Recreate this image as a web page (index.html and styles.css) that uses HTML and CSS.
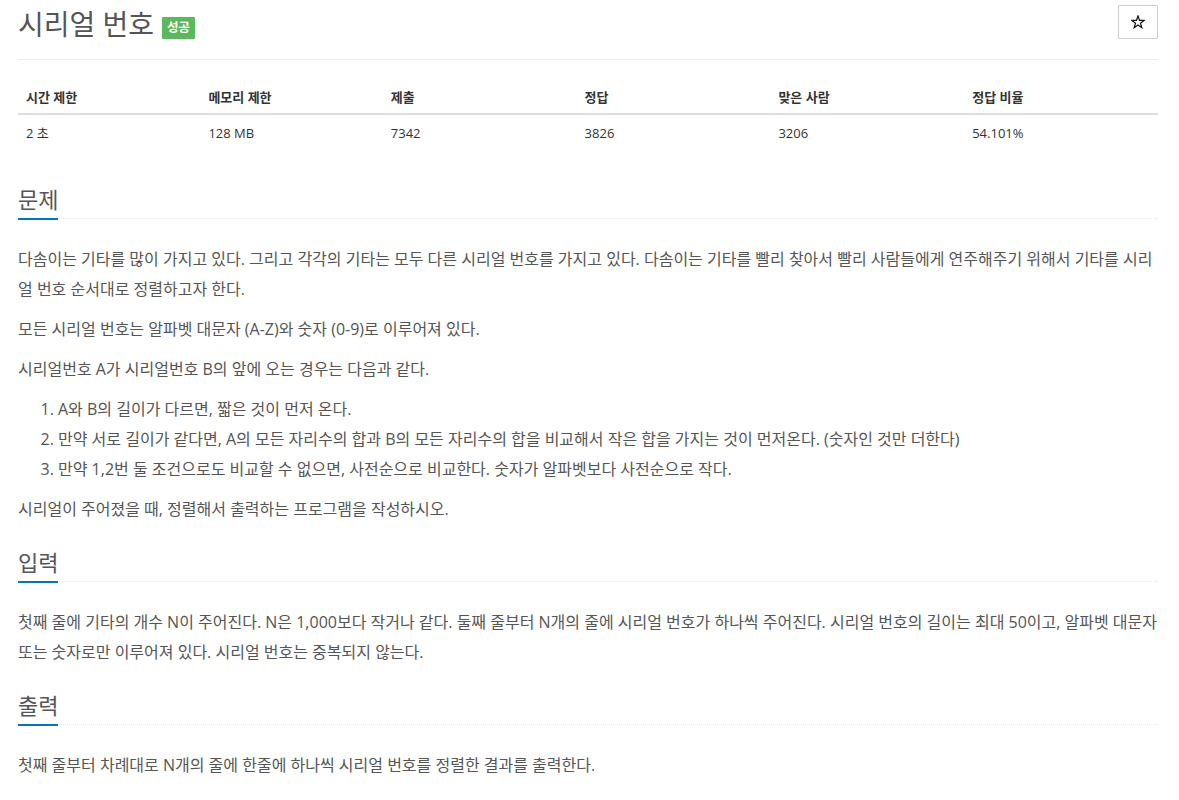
FILE: index.html
```html
<!DOCTYPE html>
<html lang="ko">
<head>
<meta charset="utf-8">
<title>시리얼 번호</title>
<link rel="stylesheet" href="styles.css">
</head>
<body>
<div class="container">
  <div class="page-header">
    <h1 class="title">시리얼 번호 <span class="label-success">성공</span></h1>
    <button class="star-btn" type="button" aria-label="즐겨찾기">
      <svg class="star-icon" width="14" height="14" viewBox="0 0 14 14" aria-hidden="true">
        <path d="M7 0.9 L8.53 5.3 L13.18 5.39 L9.47 8.2 L10.82 12.66 L7 10 L3.18 12.66 L4.53 8.2 L0.82 5.39 L5.47 5.3 Z" fill="none" stroke="#111" stroke-width="1.2" stroke-linejoin="miter"/>
      </svg>
    </button>
  </div>

  <table class="info-table">
    <thead>
      <tr>
        <th class="w16">시간 제한</th>
        <th class="w16">메모리 제한</th>
        <th class="w17">제출</th>
        <th class="w17">정답</th>
        <th class="w17">맞은 사람</th>
        <th class="w17">정답 비율</th>
      </tr>
    </thead>
    <tbody>
      <tr>
        <td>2 초</td>
        <td>128 MB</td>
        <td>7342</td>
        <td>3826</td>
        <td>3206</td>
        <td>54.101%</td>
      </tr>
    </tbody>
  </table>

  <section class="problem-section">
    <div class="headline"><h2>문제</h2></div>
    <div class="problem-text">
      <p>다솜이는 기타를 많이 가지고 있다. 그리고 각각의 기타는 모두 다른 시리얼 번호를 가지고 있다. 다솜이는 기타를 빨리 찾아서 빨리 사람들에게 연주해주기 위해서 기타를 시리얼 번호 순서대로 정렬하고자 한다.</p>
      <p>모든 시리얼 번호는 알파벳 대문자 (A-Z)와 숫자 (0-9)로 이루어져 있다.</p>
      <p>시리얼번호 A가 시리얼번호 B의 앞에 오는 경우는 다음과 같다.</p>
      <ol>
        <li>A와 B의 길이가 다르면, 짧은 것이 먼저 온다.</li>
        <li>만약 서로 길이가 같다면, A의 모든 자리수의 합과 B의 모든 자리수의 합을 비교해서 작은 합을 가지는 것이 먼저온다. (숫자인 것만 더한다)</li>
        <li>만약 1,2번 둘 조건으로도 비교할 수 없으면, 사전순으로 비교한다. 숫자가 알파벳보다 사전순으로 작다.</li>
      </ol>
      <p>시리얼이 주어졌을 때, 정렬해서 출력하는 프로그램을 작성하시오.</p>
    </div>
  </section>

  <section class="problem-section">
    <div class="headline"><h2>입력</h2></div>
    <div class="problem-text">
      <p>첫째 줄에 기타의 개수 N이 주어진다. N은 1,000보다 작거나 같다. 둘째 줄부터 N개의 줄에 시리얼 번호가 하나씩 주어진다. 시리얼 번호의 길이는 최대 50이고, 알파벳 대문자 또는 숫자로만 이루어져 있다. 시리얼 번호는 중복되지 않는다.</p>
    </div>
  </section>

  <section class="problem-section">
    <div class="headline"><h2>출력</h2></div>
    <div class="problem-text">
      <p>첫째 줄부터 차례대로 N개의 줄에 한줄에 하나씩 시리얼 번호를 정렬한 결과를 출력한다.</p>
    </div>
  </section>
</div>
</body>
</html>
```

FILE: styles.css
```css
html, body {
  margin: 0;
  padding: 0;
  background: #fff;
}

body {
  font-family: "Open Sans", "Noto Sans CJK KR", sans-serif;
  color: #555;
  font-size: 16px;
}

.container {
  width: 1140px;
  padding: 0 21px 0 18px;
}

.page-header {
  display: flex;
  justify-content: space-between;
  align-items: flex-start;
  border-bottom: 1px solid #eee;
  padding-bottom: 11px;
}

.title {
  margin: 0;
  font-size: 28px;
  font-weight: 400;
  line-height: 48px;
  color: #555;
  display: flex;
  align-items: center;
}

.label-success {
  display: inline-block;
  margin-left: 8px;
  margin-top: 8px;
  background: #5cb85c;
  color: #fff;
  font-size: 12.5px;
  font-weight: 700;
  line-height: 14px;
  padding: 4px 5px;
  border-radius: 1px;
}

.star-btn {
  margin-top: 5px;
  width: 40px;
  height: 34px;
  border: 1px solid #ccc;
  background: #fff;
  padding: 0;
  border-radius: 1px;
  display: flex;
  align-items: center;
  justify-content: center;
}

.star-icon {
  display: block;
}

.info-table {
  width: 100%;
  border-collapse: collapse;
  margin: 19px 0 20px;
  font-size: 13px;
  color: #333;
}

.info-table th,
.info-table td {
  text-align: left;
  padding: 8px;
  line-height: 20px;
}

.info-table th {
  font-weight: 700;
  padding-bottom: 6px;
  border-bottom: 2px solid #ddd;
}

.w16 { width: 16%; }
.w17 { width: 17%; }

.problem-section {
  display: flow-root;
}

.headline {
  margin: 17px 0 25px;
  border-bottom: 1px dotted #e4e9f0;
}

.headline h2 {
  display: inline-block;
  margin: 0 0 -2px;
  padding-bottom: 7px;
  font-size: 22px;
  line-height: 23px;
  font-weight: 400;
  color: #555;
  border-bottom: 2px solid #0076c0;
}

.problem-text p {
  margin: 0 0 10px;
  line-height: 30px;
}

.problem-text ol {
  margin: 0 0 10px;
  padding-left: 40px;
  line-height: 30px;
}
```
